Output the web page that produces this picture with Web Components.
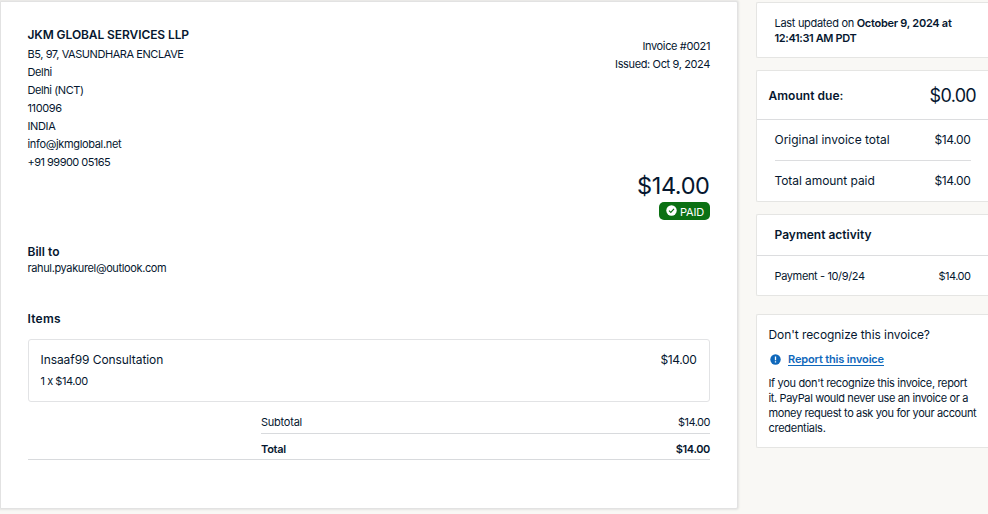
<!DOCTYPE html>
<html lang="en">
<head>
<meta charset="utf-8">
<title>Invoice #0021</title>
<style>
  html, body {
    margin: 0;
    height: 514px;
    overflow: hidden;
  }

  body {
    background: #f9f8f5;
    color: #06172f;
    font-family: Inter, "Liberation Sans", sans-serif;
    font-size: 11px;
    letter-spacing: -0.37px;
  }
</style>
</head>
<body>
<invoice-page></invoice-page>

<script>
const define = (name, html) => {
  const template = document.createElement('template')
  template.innerHTML = html

  customElements.define(name, class extends HTMLElement {
    constructor() {
      super()
      this.attachShadow({ mode: 'open' }).appendChild(template.content.cloneNode(true))
    }
  })
}

// one run of text, --track adjusts the spacing
define('text-run', `
  <style>
    :host {
      display: block;
      white-space: nowrap;
      font-size: var(--size, 11px);
      line-height: var(--line, 18px);
      letter-spacing: var(--track, -0.37px);
    }
    :host([medium]) {
      --size: 12px;
      --track: -0.07px;
    }
    :host([bold]) { 
      font-weight: 600; 
    }
  </style>
  <slot></slot>
`)

// label on the left, amount on the right
define('amount-row', `
  <style>
    :host {
      display: flex;
      align-items: center;
      justify-content: space-between;
      box-sizing: border-box;
    }
  </style>
  <slot></slot>
  <slot name="amount"></slot>
`)

define('paid-badge', `
  <style>
    :host {
      display: flex;
      align-items: center;
      gap: 3px;
      box-sizing: border-box;
      width: 51px;
      height: 18px;
      padding: 1px 0 0 7px;
      border-radius: 5px;
      background: #0b7013;
      color: #fff;
    }
    svg { 
      display: block; 
      flex: none;
      margin-top: -2px;
    }
    text-run { 
      --line: 17px; 
      --track: -0.17px;
      padding-top: 1px;
    }
  </style>
  <svg width="11" height="11" viewBox="0 0 11 11">
    <circle cx="5.5" cy="5.5" r="5.2" fill="#fff"/>
    <path d="M3 5.7 4.8 7.4 8 3.8" fill="none" stroke="#0b7013" stroke-width="1.1"/>
  </svg>
  <text-run><slot></slot></text-run>
`)

define('side-card', `
  <style>
    :host {
      display: block;
      box-sizing: border-box;
      border: 1px solid #e5e5e3;
      border-right: none;
      border-radius: 2px 0 0 2px;
      background: #fff;
    }
  </style>
  <slot></slot>
`)

define('report-link', `
  <style>
    :host {
      display: flex;
      align-items: center;
      gap: 7px;
      padding-left: 1.5px;
      color: #0f68bb;
    }
    svg { 
      display: block; 
      flex: none;
    }
    a {
      color: inherit;
      text-decoration: underline;
      text-underline-offset: 2px;
      text-decoration-thickness: 1px;
    }
    text-run { --track: -0.15px; }
  </style>
  <svg width="11" height="11" viewBox="0 0 11 11">
    <circle cx="5.5" cy="5.5" r="5.2" fill="#0f68bb"/>
    <path d="M5.5 2.4V6.2M5.5 7.3V8.6" stroke="#fff" stroke-width="1.3"/>
  </svg>
  <text-run bold><a href="#"><slot></slot></a></text-run>
`)

define('invoice-sheet', `
  <style>
    :host {
      display: flex;
      flex-direction: column;
      box-sizing: border-box;
      width: 738px;
      height: 508px;
      padding: 23px 27px 0;
      border: 1px solid #e2e2e2;
      border-radius: 0 2px 2px 0;
      background: #fff;
      box-shadow: 0 0 2px 1px #e4e4e2;
    }
    header {
      display: flex;
      justify-content: space-between;
      height: 218px;
    }
    header, .bill, .items {
      margin-left: -0.5px;
    }
    .summary {
      display: flex;
      flex-direction: column;
      align-items: flex-end;
      padding-top: 12px;
    }
    .total {
      --size: 23.5px;
      --track: -0.4px;
      --line: 30px;
      margin: 98px 0.5px 1px 0;
    }
    .bill { --line: 16px; }
    .items { 
      margin-top: 34px; 
    }
    .item {
      box-sizing: border-box;
      height: 63px;
      margin-top: 11px;
      padding: 11px 12.5px 0 11.5px;
      border: 1px solid #e2e3e5;
      border-radius: 3px;
    }
    .item > text-run { margin-top: 3px; }
    .totals {
      padding-left: 233px;
      border-bottom: 1px solid #d8dadd;
    }
    .subtotal {
      height: 32px;
      padding-top: 9px;
      border-bottom: 1px solid #d8dadd;
    }
    .grand {
      height: 25px;
      padding-top: 5px;
    }
  </style>
  <header>
    <div>
      <text-run medium bold style="--line: 20px; --track: -0.09px">JKM GLOBAL SERVICES LLP</text-run>
      <text-run style="--track: -0.43px">B5, 97, VASUNDHARA ENCLAVE</text-run>
      <text-run>Delhi</text-run>
      <text-run style="--track: -0.43px">Delhi (NCT)</text-run>
      <text-run>110096</text-run>
      <text-run>INDIA</text-run>
      <text-run style="--track: -0.34px">info@jkmglobal.net</text-run>
      <text-run style="--track: -0.53px">+91 99900 05165</text-run>
    </div>
    <div class="summary">
      <text-run>Invoice #0021</text-run>
      <text-run>Issued: Oct 9, 2024</text-run>
      <text-run class="total">$14.00</text-run>
      <paid-badge>PAID</paid-badge>
    </div>
  </header>
  <div class="bill">
    <text-run medium bold style="--track: 0.03px; --line: 17px">Bill to</text-run>
    <text-run>rahul.pyakurel@outlook.com</text-run>
  </div>
  <text-run class="items" medium bold style="--track: 0.25px">Items</text-run>
  <div class="item">
    <amount-row>
      <text-run medium>Insaaf99 Consultation</text-run>
      <text-run medium slot="amount" style="--track: -0.35px">$14.00</text-run>
    </amount-row>
    <text-run style="--track: -0.45px">1 x $14.00</text-run>
  </div>
  <div class="totals">
    <amount-row class="subtotal">
      <text-run style="--track: -0.23px">Subtotal</text-run>
      <text-run slot="amount" style="--track: -0.5px">$14.00</text-run>
    </amount-row>
    <amount-row class="grand">
      <text-run bold style="--track: -0.25px">Total</text-run>
      <text-run bold slot="amount">$14.00</text-run>
    </amount-row>
  </div>
`)

define('invoice-sidebar', `
  <style>
    :host {
      display: flex;
      flex-direction: column;
      width: 232px;
      padding-top: 1px;
    }
    .updated {
      height: 56px;
      margin-bottom: 12px;
      padding: 13px 0 0 17.5px;
      --line: 15px;
    }
    .updated b { 
      font-weight: 600; 
      letter-spacing: -0.27px;
    }
    .amounts {
      height: 132px;
      margin-bottom: 12px;
    }
    .due {
      height: 49px;
      padding: 1px 12px 0 11.5px;
      border-bottom: 1px solid #dcdddf;
    }
    .due [slot] { padding-top: 1px; }
    .line {
      height: 40px;
      margin: 0 17.5px;
    }
    .line + .line { border-top: 1px solid #dcdddf; }
    .activity {
      height: 82px;
      margin-bottom: 18px;
    }
    .activity .title {
      box-sizing: border-box;
      height: 41px;
      padding: 11px 17.5px 0;
      border-bottom: 1px solid #dcdddf;
    }
    .report {
      height: 134px;
      padding: 11px 0 0 11.5px;
    }
    report-link { margin: 6px 0 8px; }
    .note { --line: 15px; }
  </style>
  <side-card class="updated">
    <text-run style="--track: -0.3px">Last updated on <b>October 9, 2024 at</b></text-run>
    <text-run bold>12:41:31 AM PDT</text-run>
  </side-card>
  <side-card class="amounts">
    <amount-row class="due">
      <text-run medium bold style="--track: 0.04px">Amount due:</text-run>
      <text-run slot="amount" style="--size: 18px; --track: -0.7px">$0.00</text-run>
    </amount-row>
    <amount-row class="line">
      <text-run medium style="--track: -0.02px">Original invoice total</text-run>
      <text-run medium slot="amount" style="--track: -0.35px">$14.00</text-run>
    </amount-row>
    <amount-row class="line">
      <text-run medium>Total amount paid</text-run>
      <text-run medium slot="amount" style="--track: -0.35px">$14.00</text-run>
    </amount-row>
  </side-card>
  <side-card class="activity">
    <div class="title"><text-run medium bold style="--track: 0.01px">Payment activity</text-run></div>
    <amount-row class="line">
      <text-run>Payment - 10/9/24</text-run>
      <text-run slot="amount" style="--track: -0.5px">$14.00</text-run>
    </amount-row>
  </side-card>
  <side-card class="report">
    <text-run medium>Don't recognize this invoice?</text-run>
    <report-link>Report this invoice</report-link>
    <div class="note">
      <text-run style="--track: -0.34px">If you don't recognize this invoice, report</text-run>
      <text-run>it. PayPal would never use an invoice or a</text-run>
      <text-run>money request to ask you for your account</text-run>
      <text-run style="--track: -0.28px">credentials.</text-run>
    </div>
  </side-card>
`)

define('invoice-page', `
  <style>
    :host {
      display: flex;
      align-items: flex-start;
      gap: 18px;
      padding-top: 1px;
    }
  </style>
  <invoice-sheet></invoice-sheet>
  <invoice-sidebar></invoice-sidebar>
`)
</script>
</body>
</html>
